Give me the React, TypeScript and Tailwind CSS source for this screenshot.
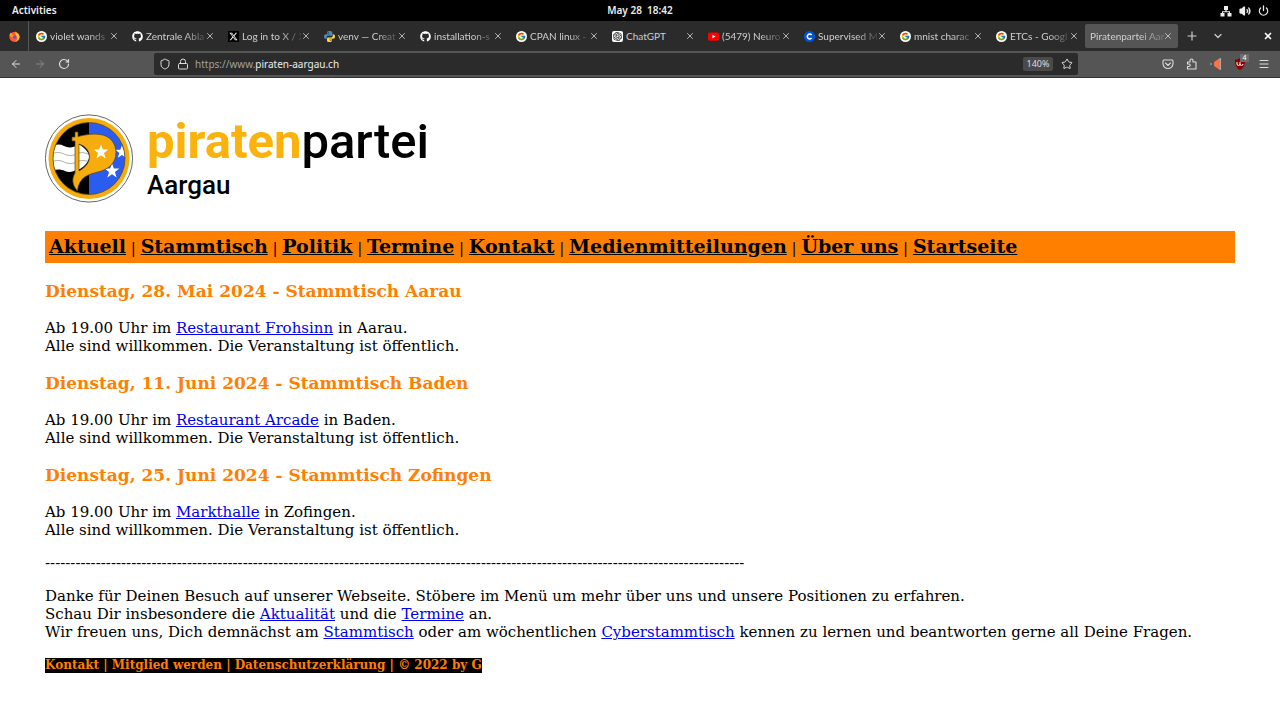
import type { ReactNode } from "react";
import { FcGoogle } from "react-icons/fc";
import { FaGithub, FaXTwitter } from "react-icons/fa6";
import { SiOpenai } from "react-icons/si";
import {
  ArrowLeft,
  ArrowRight,
  ChevronDown,
  Lock,
  Menu,
  Plus,
  Power,
  RotateCw,
  Shield,
  Star,
  Volume2,
  X,
} from "lucide-react";

function Google() {
  return (
    <span className="flex size-[11px] items-center justify-center rounded-full bg-white">
      <FcGoogle className="size-[9px]" />
    </span>
  );
}

function Python() {
  return (
    <svg viewBox="0 0 24 24" className="size-[11px]">
      <path fill="#4b8bbe" d="M12 0C7 0 6.500 2 6.500 3.500V6h6v1H4C1.500 7 0 9 0 12s1.500 5 3.500 5H6v-3c0-2 1.500-3.500 3.500-3.500h6c1.500 0 2.700-1.300 2.700-3V3.500C18.200 1.500 16 0 12 0zM9 2a1.200 1.200 0 1 1 0 2.400A1.200 1.200 0 0 1 9 2z" />
      <path fill="#ffd43b" d="M12 24c5 0 5.500-2 5.500-3.500V18h-6v-1H20c2.500 0 4-2 4-5s-1.500-5-3.500-5H19v3.500c0 2-1.500 3.500-3.500 3.500h-6C8 14 6.500 15.300 6.500 17v3.500c0 2 1.500 3.500 5.500 3.500zm3-2a1.200 1.200 0 1 1 0-2.400 1.200 1.200 0 0 1 0 2.400z" />
    </svg>
  );
}

function YouTube() {
  return (
    <svg viewBox="0 0 24 24" className="size-[11px]">
      <rect y="3" width="24" height="18" rx="4" fill="#f00" />
      <path d="M9.500 8v8l7-4z" fill="#fff" />
    </svg>
  );
}

function Coursera() {
  return (
    <svg viewBox="0 0 24 24" className="size-[11px]">
      <circle cx="12" cy="12" r="12" fill="#0056d2" />
      <path d="M16.500 8.500A5.300 5.300 0 1 0 16.500 15.500" fill="none" stroke="#fff" strokeWidth="3.400" />
    </svg>
  );
}

function Firefox() {
  return (
    <svg viewBox="0 0 24 24" className="size-[11px]">
      <circle cx="12" cy="13" r="11" fill="#ff5a2c" />
      <path d="M14 0c1 4 8 5 9 12 0 6-4 11-10 12 5-3 6-8 4-12-2-3-4-5-3-12z" fill="#ffc32e" />
      <path d="M1 11C1 7 3 4 4 3c1 2 2 3 4 3-2 2-3 4-3 7z" fill="#ffa01f" />
      <circle cx="12" cy="13" r="4" fill="#8b3fd9" />
      <path d="M5 10c3-2 5-1 6 1-3 0-4 2-3 4-3-1-4-3-3-5z" fill="#ff9a1f" />
    </svg>
  );
}

const tabs: { title: string; icon?: ReactNode }[] = [
  { title: "violet wands", icon: <Google /> },
  { title: "Zentrale Abla", icon: <FaGithub className="size-[11px] text-white" /> },
  {
    title: "Log in to X / X",
    icon: (
      <span className="flex size-[11px] items-center justify-center bg-black">
        <FaXTwitter className="size-[9px] text-white" />
      </span>
    ),
  },
  { title: "venv — Creat", icon: <Python /> },
  { title: "installation-s", icon: <FaGithub className="size-[11px] text-white" /> },
  { title: "CPAN linux -", icon: <Google /> },
  {
    title: "ChatGPT",
    icon: (
      <span className="flex size-[11px] items-center justify-center rounded-xs bg-white">
        <SiOpenai className="size-[9px] text-black" />
      </span>
    ),
  },
  { title: "(5479) Neuro", icon: <YouTube /> },
  { title: "Supervised M", icon: <Coursera /> },
  { title: "mnist charac", icon: <Google /> },
  { title: "ETCs - Googl", icon: <Google /> },
  { title: "Piratenpartei Aar" },
];

function SystemBar() {
  return (
    <div className="grid h-[21px] grid-cols-3 items-center bg-black px-3 text-[10px] font-semibold text-[#eeeeee]">
      <button className="justify-self-start">Activities</button>
      <time className="justify-self-center whitespace-pre">May 28  18:42</time>
      <div className="-mr-1 flex items-center gap-[7px] justify-self-end">
        <svg viewBox="0 0 12 12" className="size-3" fill="#eee">
          <path d="M4 1h4v4H6.600v1.200H10V8H11.500v3.500h-4V8H9V7.200H3V8h1.500v3.500h-4V8H2V6.200h3.400V5H4z" />
        </svg>
        <Volume2 className="size-3" fill="currentColor" strokeWidth={2.5} />
        <Power className="mr-[3px] size-[11px]" strokeWidth={2.8} />
      </div>
    </div>
  );
}

function TabStrip() {
  return (
    <div className="flex h-[30px] items-center bg-[#2b2b2b] text-[#cfcfcf]">
      <button aria-label="Firefox" className="flex h-full w-[29px] shrink-0 items-center justify-center border-r border-[#555555]">
        <Firefox />
      </button>
      <div className="flex min-w-0 flex-1 items-center font-['Lato',sans-serif] text-[10px]">
        {tabs.map((tab, i) => {
          const active = i === tabs.length - 1;
          return (
            <div key={i} className="w-24 shrink pr-[3px]">
              <div className={active ? "flex h-6 items-center rounded-xs bg-[#555555] pr-[5px] pl-[5px]" : "flex h-6 items-center gap-[3px] pr-[3px] pl-[7px]"}>
                {tab.icon && <span className="shrink-0">{tab.icon}</span>}
                <button
                  className={
                    tab.title === "ChatGPT"
                      ? "min-w-0 flex-1 text-left whitespace-nowrap"
                      : "min-w-0 flex-1 text-left whitespace-nowrap [mask-image:linear-gradient(to_right,black_65%,rgb(0_0_0/0.15))]"
                  }
                >
                  {tab.title}
                </button>
                <button aria-label={"Close " + tab.title} className="-ml-[3px] flex size-[10px] shrink-0 items-center justify-center">
                  <X className="size-[10px]" strokeWidth={2} />
                </button>
              </div>
            </div>
          );
        })}
        <button aria-label="New tab" className="ml-1 flex w-[23px] shrink-0 items-center"><Plus className="size-[14px]" strokeWidth={2} /></button>
        <button aria-label="List tabs" className="ml-1 shrink-0"><ChevronDown className="size-3" strokeWidth={2.4} /></button>
      </div>
      <button aria-label="Close window" className="mr-[7px] text-white"><X className="size-[10px]" strokeWidth={4} /></button>
    </div>
  );
}

function Toolbar() {
  return (
    <div className="flex h-[27px] items-center border-b border-[#333333] bg-[#555555] text-[10px] text-[#dddddd]">
      <div className="flex w-[154px] shrink-0 items-center gap-3 pl-[10px]">
        <button aria-label="Back"><ArrowLeft className="size-3" strokeWidth={2} /></button>
        <button aria-label="Forward" className="text-[#888888]"><ArrowRight className="size-3" strokeWidth={2} /></button>
        <button aria-label="Reload"><RotateCw className="size-3" strokeWidth={2.4} /></button>
      </div>
      <form className="flex h-[22px] min-w-0 flex-1 items-center rounded-xs bg-[#2b2b2b] px-[5px]">
        <Shield className="size-3 shrink-0" strokeWidth={2} />
        <Lock className="mx-[6px] size-3 shrink-0" strokeWidth={2} />
        <label className="relative flex min-w-0 flex-1 items-center">
          <input
            aria-label="Address"
            defaultValue="https://www.piraten-aargau.ch"
            className="w-full bg-transparent text-transparent outline-none"
          />
          <span aria-hidden="true" className="pointer-events-none absolute left-0 text-[#a0a0a0]">
            https://www.<span className="text-[#eeeeee]">piraten-aargau.ch</span>
          </span>
        </label>
        <button type="button" className="mr-2 h-[14px] w-[30px] rounded-xs bg-[#4a4a4a] text-[9px] leading-[14px]">140%</button>
        <button type="button" aria-label="Bookmark"><Star className="size-3" strokeWidth={2} /></button>
      </form>
      <div className="flex w-[202px] shrink-0 items-center justify-end gap-3 pr-[10px]">
        <button aria-label="Pocket">
          <svg viewBox="0 0 24 24" className="size-3" fill="none" stroke="currentColor" strokeWidth="2.200" strokeLinecap="round" strokeLinejoin="round">
            <path d="M4 4h16a2 2 0 0 1 2 2v5a10 10 0 0 1-20 0V6a2 2 0 0 1 2-2z" />
            <path d="m7 10 5 5 5-5" />
          </svg>
        </button>
        <button aria-label="Extensions">
          <svg viewBox="0 0 24 24" className="size-3" fill="none" stroke="currentColor" strokeWidth="2.200" strokeLinejoin="round">
            <path d="M3 8h5V5a3 3 0 0 1 6 0v3h6v14H3v-5h3a2.500 2.500 0 0 0 0-5H3z" />
          </svg>
        </button>
        <button aria-label="Volume control">
          <svg viewBox="0 0 12 12" className="size-3">
            <path d="M10 0v12L4 8V4z" fill="#ff7043" />
            <path d="M4 3.500v5H2v-5z" fill="#44546a" />
            <path d="M0 5h2v2H0z" fill="#7689a3" />
            <path d="M10 0h1v12h-1z" fill="#a9a9a9" />
          </svg>
        </button>
        <button aria-label="uBlock Origin" className="relative">
          <svg viewBox="0 0 12 12" className="size-3">
            <path d="M6 0c2 1 3 1.500 5 1.500C11 7 10 10 6 12 2 10 1 7 1 1.500 3 1.500 4 1 6 0z" fill="#8a0000" />
            <path d="M3 4v2a1.500 1.500 0 0 0 3 0V4m0 2a1.500 1.500 0 0 0 3 0" fill="none" stroke="#fff" strokeWidth="1" />
          </svg>
          <span className="absolute -top-1 left-[6px] flex h-2 w-[9px] items-center justify-center bg-[#6d6d6d] text-[7px] text-white">4</span>
        </button>
        <button aria-label="Menu"><Menu className="size-3" strokeWidth={2} /></button>
      </div>
    </div>
  );
}

const star = "M0-7 1.700-2.200 6.700-2.200 2.700.9 4.200 5.800 0 2.900-4.200 5.800-2.700.9-6.700-2.200-1.700-2.200z";

function Logo() {
  return (
    <div className="flex h-[90px] items-start font-['Roboto',sans-serif]">
      <svg viewBox="0 0 90 90" className="size-[90px] shrink-0" role="img" aria-label="Piratenpartei Aargau">
        <defs>
          <clipPath id="disc"><circle cx="44" cy="44.500" r="36" /></clipPath>
        </defs>
        <circle cx="44" cy="44.500" r="43.600" fill="#fff" stroke="#555" strokeWidth="0.900" />
        <circle cx="44" cy="44.500" r="40.500" fill="#f5ac0c" />
        <g clipPath="url(#disc)">
          <path d="M0 0h44v90H0z" fill="#000" />
          <path d="M44 0h46v90H44z" fill="#2a5cf0" />
          <path d="M6 33c5-3 9-3 13-1s9 2 14-1h2c6 4 9 8 9 12s-4 9-9 12h-2c-5 3-9 4-13 2s-9-2-14 0z" fill="#fff" />
          <path d="M6 40c5-2 9-2 13 0s9 2 12 0M6 48c5-2 9-2 13 0s9 2 12 0M34 39c4-1 6 0 9 1M34 47c4-1 6 0 9 0" fill="none" stroke="#999" strokeWidth="0.800" />
          <path transform="translate(77 38)" d={star} fill="#fff" />
          <path transform="translate(67 57) scale(1.100)" d={star} fill="#fff" />
        </g>
        <circle cx="44" cy="44.500" r="36" fill="none" stroke="#5b4a1c" strokeWidth="0.800" />
        <path
          d="M30 18h3v4.500c8-2 15-3 22-2 10 1 16 9 16 18 0 11-8 17-18 19.500-10 2.500-19 5-20.500 19C28 72 26 66 30 59V27h-3v-4h3zM34 30v27c7-4 10.500-9 10.500-14 0-6-4-11-10.500-13z"
          fill="#f5ac0c"
          fillRule="evenodd"
          stroke="#54431c"
          strokeWidth="0.700"
        />
        <path transform="translate(56 38) scale(1.100)" d={star} fill="#fff" />
      </svg>
      <div className="ml-3">
        <div className="text-[49px] leading-[56px] font-medium text-black"><span className="font-bold text-[#fbb20d]">piraten</span>partei</div>
        <div className="text-[26px] leading-[30px] font-medium text-black">Aargau</div>
      </div>
    </div>
  );
}

function Link({ children }: { children: ReactNode }) {
  return <a href="#" className="text-[#0000ee] underline">{children}</a>;
}

const menu = ["Aktuell", "Stammtisch", "Politik", "Termine", "Kontakt", "Medienmitteilungen", "Über uns", "Startseite"];

const events = [
  { heading: "Dienstag, 28. Mai 2024 - Stammtisch Aarau", venue: "Restaurant Frohsinn", town: "Aarau" },
  { heading: "Dienstag, 11. Juni 2024 - Stammtisch Baden", venue: "Restaurant Arcade", town: "Baden" },
  { heading: "Dienstag, 25. Juni 2024 - Stammtisch Zofingen", venue: "Markthalle", town: "Zofingen" },
];

export default function App() {
  return (
    <div className="min-h-screen bg-white">
      <header className="font-['Noto_Sans',sans-serif]">
        <SystemBar />
        <TabStrip />
        <Toolbar />
      </header>
      <main className="px-[45px] pt-9 font-['DejaVu_Serif',serif] text-[15px] leading-[18px] text-black">
        <Logo />
        <nav className="mt-[27px] bg-[#ff8000] px-1 py-[3px] leading-6">
          {menu.map((item, i) => (
            <span key={item}>
              {i > 0 && " | "}
              <a href="#" className="text-[19px] font-bold underline">{item}</a>
            </span>
          ))}
        </nav>
        {events.map((event) => (
          <section key={event.heading} className="mt-[17px]">
            <h3 className="text-[17px] leading-[22px] font-bold text-[#ff8000]">{event.heading}</h3>
            <p className="mt-[17px]">
              Ab 19.00 Uhr im <Link>{event.venue}</Link> in {event.town}.<br />
              Alle sind willkommen. Die Veranstaltung ist öffentlich.
            </p>
          </section>
        ))}
        <p className="mt-[15px]">{"-".repeat(138)}</p>
        <p className="mt-[15px]">
          Danke für Deinen Besuch auf unserer Webseite. Stöbere im Menü um mehr über uns und unsere Positionen zu erfahren.<br />
          Schau Dir insbesondere die <Link>Aktualität</Link> und die <Link>Termine</Link> an.<br />
          Wir freuen uns, Dich demnächst am <Link>Stammtisch</Link> oder am wöchentlichen <Link>Cyberstammtisch</Link> kennen zu lernen und beantworten gerne all Deine Fragen.
        </p>
        <footer className="mt-[17px] w-fit bg-black text-[12px] leading-[15px] font-bold text-[#ff8000]">
          <a href="#">Kontakt</a> | <a href="#">Mitglied werden</a> | <a href="#">Datenschutzerklärung</a> | © 2022 by G
        </footer>
      </main>
    </div>
  );
}
